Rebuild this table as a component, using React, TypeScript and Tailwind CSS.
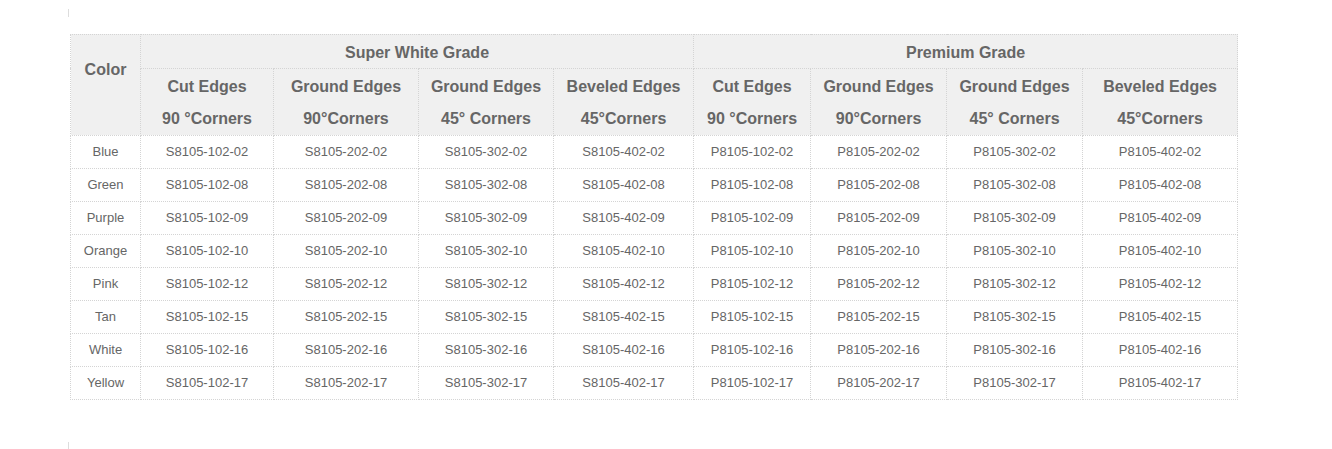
import React from 'react';

const colors = [
  ['Blue', '02'],
  ['Green', '08'],
  ['Purple', '09'],
  ['Orange', '10'],
  ['Pink', '12'],
  ['Tan', '15'],
  ['White', '16'],
  ['Yellow', '17'],
];

const subHeads = [
  ['Cut Edges', '90 °Corners'],
  ['Ground Edges', '90°Corners'],
  ['Ground Edges', '45° Corners'],
  ['Beveled Edges', '45°Corners'],
];

const widths = ['w-[70px]', 'w-[133px]', 'w-[145px]', 'w-[135px]', 'w-[140px]', 'w-[117px]', 'w-[136px]', 'w-[136px]', 'w-[155px]'];

const cell = 'border border-dotted border-[#d4d4d4] text-center';

function App() {
  return (
    <div className="w-[1332px] h-[449px] bg-white font-['Liberation_Sans',Arial,sans-serif] text-[#666] flex flex-col">
      <div className="ml-[68px] mt-[9px] w-px h-[10px] bg-[#ddd]" />
      <table className="ml-[70px] mt-[17px] w-[1167px] table-fixed border-collapse">
        <colgroup>
          {widths.map((w, i) => (
            <col key={i} className={w} />
          ))}
        </colgroup>
        <thead className="bg-[#f0f0f0] text-[16px] font-bold">
          <tr className="h-[34px]">
            <th rowSpan={2} className={cell + ' align-top pt-[23px]'}>
              Color
            </th>
            <th colSpan={4} className={cell + ' pt-[3px]'}>
              Super White Grade
            </th>
            <th colSpan={4} className={cell + ' pt-[3px]'}>
              Premium Grade
            </th>
          </tr>
          <tr className="h-[63px]">
            {[...subHeads, ...subHeads].map(([a, b], i) => (
              <th key={i} className={cell + ' leading-[32px] pt-[2px]'}>
                {a}
                <br />
                {b}
              </th>
            ))}
          </tr>
        </thead>
        <tbody className="text-[13px]">
          {colors.map(([name, code]) => (
            <tr key={name} className="h-[33px]">
              <td className={cell}>{name}</td>
              {['S', 'P'].map((p) =>
                ['1', '2', '3', '4'].map((n) => (
                  <td key={p + n} className={cell}>
                    {p}8105-{n}02-{code}
                  </td>
                ))
              )}
            </tr>
          ))}
        </tbody>
      </table>
      <div className="ml-[68px] mt-[42px] w-px h-[9px] bg-[#ddd]" />
    </div>
  );
}

export default App;
